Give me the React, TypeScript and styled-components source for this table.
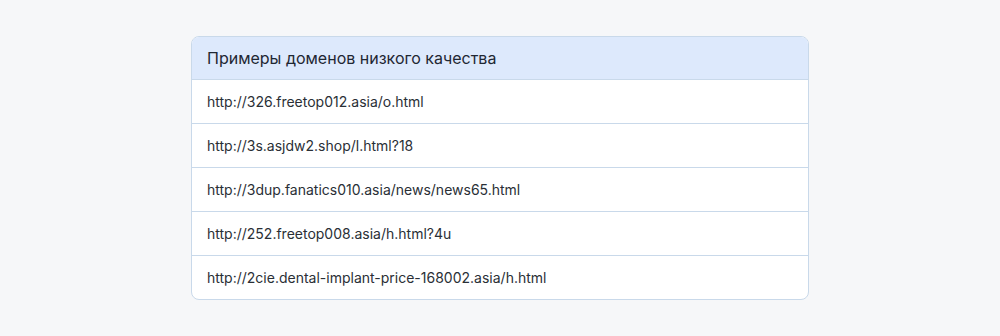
import styled, { createGlobalStyle } from 'styled-components';

const GlobalStyle = createGlobalStyle`
    body {
        margin: 0;
        background: #f6f7f9;
        font-family: Inter, "Noto Sans", sans-serif;
    }
`;

const Page = styled.div`
    display: flex;
    justify-content: center;
    align-items: center;
    height: 336px;
`;

const Card = styled.div`
    width: 618px;
    box-sizing: border-box;
    border: 1px solid #c9d9ea;
    border-radius: 8px;
    background: #ffffff;
    overflow: hidden;
`;

const Header = styled.div`
    height: 42px;
    display: flex;
    align-items: center;
    padding: 0 15px;
    background: #dde9fc;
    border-bottom: 1px solid #c9d9ea;
    color: #1f2733;
    font-size: 16px;
    font-weight: 400;
`;

const Row = styled.div<{ $last?: boolean }>`
    height: 43px;
    display: flex;
    align-items: center;
    padding: 0 15px;
    border-bottom: ${p => (p.$last ? 'none' : '1px solid #c9d9ea')};
    color: #2a2f36;
    font-size: 14px;
`;

const domains = [
    'http://326.freetop012.asia/o.html',
    'http://3s.asjdw2.shop/l.html?18',
    'http://3dup.fanatics010.asia/news/news65.html',
    'http://252.freetop008.asia/h.html?4u',
    'http://2cie.dental-implant-price-168002.asia/h.html',
];

const App = () => {
    return (
        <>
            <GlobalStyle />
            <Page>
                <Card>
                    <Header>Примеры доменов низкого качества</Header>
                    {domains.map((d, i) => (
                        <Row key={d} $last={i === domains.length - 1}>{d}</Row>
                    ))}
                </Card>
            </Page>
        </>
    );
};

export default App;
